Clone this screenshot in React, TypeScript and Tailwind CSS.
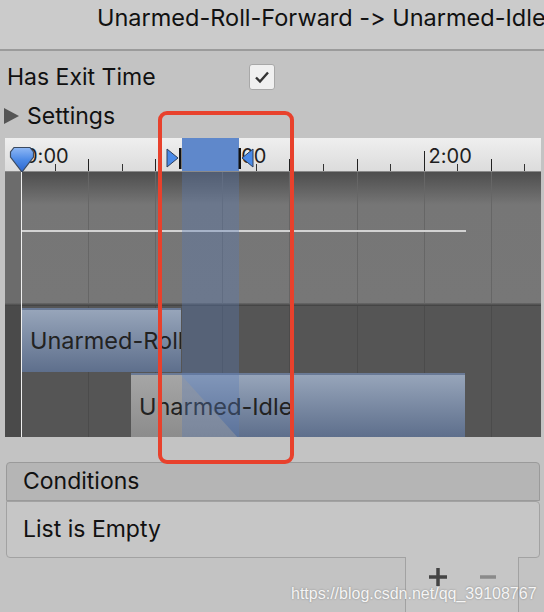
import React from 'react'

// major tick positions on the timeline (px from timeline's left edge)
const ORIGIN = 16
const STEP = 67.1
const majors = Array.from({ length: 8 }, (_, i) => ORIGIN + i * STEP)
const minors = Array.from({ length: 8 }, (_, i) => ORIGIN + i * STEP + STEP / 2)

function Playhead() {
  return (
    <svg width="26" height="28" viewBox="0 0 26 28" className="absolute left-[4px] top-[8px]">
      <defs>
        <linearGradient id="ph" x1="0" y1="0" x2="0" y2="1">
          <stop offset="0" stopColor="#8fb8f5" />
          <stop offset="0.5" stopColor="#4d8ae6" />
          <stop offset="1" stopColor="#2a64cf" />
        </linearGradient>
      </defs>
      <path d="M5 1.5 H21 L24.5 6 V11 L13 26 L1.5 11 V6 Z" fill="url(#ph)" stroke="#3b4a60" strokeWidth="1.2" />
    </svg>
  )
}

function Timeline() {
  return (
    <div className="relative mx-[5px] h-[299px] w-[536px] overflow-hidden bg-[#555]">
      {/* ruler */}
      <div className="relative h-[34px] border-b border-[#8a8a8a] bg-gradient-to-b from-[#efefef] to-[#dcdcdc]">
        {majors.map((x, i) => (
          <div
            key={'m' + i}
            className={`absolute bottom-0 w-px bg-[#222] ${i % 3 === 0 ? 'h-[20px]' : 'h-[12px]'}`}
            style={{ left: x }}
          />
        ))}
        {minors.map((x, i) => (
          <div key={'n' + i} className="absolute bottom-0 h-[7px] w-px bg-[#333]" style={{ left: x }} />
        ))}
        <span className="absolute top-[6px] text-[20px] leading-[24px] text-[#1e1e1e]" style={{ left: ORIGIN + 4 }}>0:00</span>
        <span className="absolute top-[6px] text-[20px] leading-[24px] text-[#1e1e1e]" style={{ left: ORIGIN + STEP * 3 + 5 }}>1:00</span>
        <span className="absolute top-[6px] text-[20px] leading-[24px] text-[#1e1e1e]" style={{ left: ORIGIN + STEP * 6 + 5 }}>2:00</span>
        {/* selected transition range */}
        <div className="absolute left-[177px] top-0 h-full w-[57px] bg-[#5f88cb]" />
        {/* transition markers */}
        <svg width="16" height="22" viewBox="0 0 16 22" className="absolute left-[161px] top-[9px]">
          <path d="M1 2 L12 11 L1 20 Z" fill="#4a8ae8" stroke="#2d3f5c" strokeWidth="1" />
          <rect x="13" y="1" width="2.5" height="21" fill="#111" />
        </svg>
        <svg width="16" height="22" viewBox="0 0 16 22" className="absolute left-[233px] top-[9px]">
          <rect x="0.5" y="1" width="2.5" height="21" fill="#111" />
          <path d="M15 2 L4 11 L15 20 Z" fill="#4a8ae8" stroke="#2d3f5c" strokeWidth="1" />
        </svg>
        <Playhead />
      </div>

      {/* curve track */}
      <div className="relative h-[131px] bg-gradient-to-b from-[#4e4e4e] via-[#767676] via-25% to-[#777]">
        <div className="absolute left-0 top-0 h-full w-[16px] bg-[#6c6c6c]" />
        {majors.map((x, i) => (
          <div key={i} className="absolute top-0 h-full w-px bg-[#666]" style={{ left: x }} />
        ))}
        <div className="absolute left-[16px] top-[58px] h-[2px] w-[445px] bg-[#d2d2d2]" />
      </div>

      <div className="h-[3px] bg-gradient-to-b from-[#6a6a6a] to-[#3e3e3e]" />

      {/* clip track */}
      <div className="relative h-[131px] bg-[#555]">
        <div className="absolute left-0 top-0 h-full w-[16px] bg-[#4a4a4a]" />
        {majors.map((x, i) => (
          <div key={i} className="absolute top-0 h-full w-px bg-[#4b4b4b]" style={{ left: x }} />
        ))}
        <div className="absolute left-[17px] top-[2px] flex h-[64px] w-[159px] items-center overflow-hidden border-t-2 border-[#6a7a96] bg-gradient-to-b from-[#97a5ba] to-[#5e6f8c] pl-[8px]">
          <span className="whitespace-nowrap text-[23.5px] text-[#222]">Unarmed-Roll</span>
        </div>
        <div className="absolute left-[126px] top-[67px] h-[64px] w-[334px] overflow-hidden border-t-2 border-[#6a7a96]">
          <div className="absolute inset-0 bg-gradient-to-b from-[#97a5ba] to-[#5e6f8c]" />
          <div className="absolute left-0 top-0 h-full w-[50px] bg-gradient-to-b from-[#a6a6a6] to-[#8c8c8c]" />
          <svg width="58" height="64" viewBox="0 0 58 64" preserveAspectRatio="none" className="absolute left-[50px] top-0">
            <defs>
              <linearGradient id="gr" x1="0" y1="0" x2="0" y2="1">
                <stop offset="0" stopColor="#a6a6a6" />
                <stop offset="1" stopColor="#8c8c8c" />
              </linearGradient>
            </defs>
            <path d="M0 0 L58 64 L0 64 Z" fill="url(#gr)" />
          </svg>
          <span className="absolute left-[8px] top-[14px] whitespace-nowrap text-[23.5px] text-[#222]">Unarmed-Idle</span>
        </div>
      </div>

      {/* playhead line */}
      <div className="absolute left-[16px] top-[34px] h-[265px] w-px bg-[#f0f0f0]" />
      {/* transition overlay on tracks */}
      <div className="absolute left-[177px] top-[34px] h-[265px] w-[57px] bg-[#5a7ab8]/35" />
    </div>
  )
}

export default function App() {
  return (
    <div
      className="relative h-[612px] w-[544px] overflow-hidden bg-[#c3c3c3] text-[#111] [font-feature-settings:'calt'_0,'liga'_0]"
      style={{ fontFamily: 'Inter, "Noto Sans", sans-serif' }}
    >
      <div className="h-[51px] border-b-2 border-[#9b9b9b] bg-[#cbcbcb] pl-[97px] pt-[4px]">
        <div className="whitespace-nowrap text-[23.5px] leading-[28px] text-[#111]">Unarmed-Roll-Forward -&gt; Unarmed-Idle</div>
      </div>

      <div className="flex h-[42px] items-center pl-[7px] pt-[10px]">
        <span className="w-[242px] text-[23px]">Has Exit Time</span>
        <div className="flex h-[26px] w-[26px] items-center justify-center rounded-[3px] border border-[#a8a8a8] bg-[#f0f0f0]">
          <svg width="16" height="14" viewBox="0 0 16 14">
            <path d="M2 7.5 L6 11.5 L14 2.5" fill="none" stroke="#333" strokeWidth="2.4" />
          </svg>
        </div>
      </div>

      <div className="flex h-[42px] items-center gap-[8px] pl-[4px] pt-[4px]">
        <svg width="15" height="16" viewBox="0 0 15 16">
          <path d="M0 0 L15 8 L0 16 Z" fill="#555" />
        </svg>
        <span className="text-[23px]">Settings</span>
      </div>

      <div className="pt-[3px]">
        <Timeline />
      </div>

      <div className="mx-[6px] mt-[25px] w-[534px] text-[23px]">
        <div className="flex h-[39px] items-center rounded-t-[4px] border border-[#9a9a9a] bg-[#b5b5b5] pl-[16px]">
          Conditions
        </div>
        <div className="flex h-[57px] items-center rounded-b-[4px] rounded-tr-[4px] border border-[#a2a2a2] bg-[#c6c6c6] pl-[16px]">
          List is Empty
        </div>
        <div className="flex justify-end pr-[21px]">
          <div className="-mt-px flex h-[60px] w-[114px] items-start justify-center gap-[32px] border-x border-b border-[#a2a2a2] bg-[#c6c6c6] pt-[10px]">
            <svg width="20" height="20" viewBox="0 0 20 20">
              <path d="M10 1 V19 M1 10 H19" stroke="#444" strokeWidth="3.5" />
            </svg>
            <svg width="16" height="20" viewBox="0 0 16 20">
              <path d="M0 10 H16" stroke="#8a8a8a" strokeWidth="3.5" />
            </svg>
          </div>
        </div>
      </div>

      {/* red annotation frame */}
      <div className="absolute left-[158px] top-[111px] h-[353px] w-[136px] rounded-[9px] border-[4px] border-[#e8412c]" />

      {/* watermark */}
      <div
        className="absolute left-[291px] top-[582px] whitespace-nowrap text-[16px] text-white/90"
        style={{ fontFamily: '"Liberation Sans", Arial, sans-serif', textShadow: '0 0 2px rgba(0,0,0,0.35)' }}
      >
        https://blog.csdn.net/qq_39108767
      </div>
    </div>
  )
}
